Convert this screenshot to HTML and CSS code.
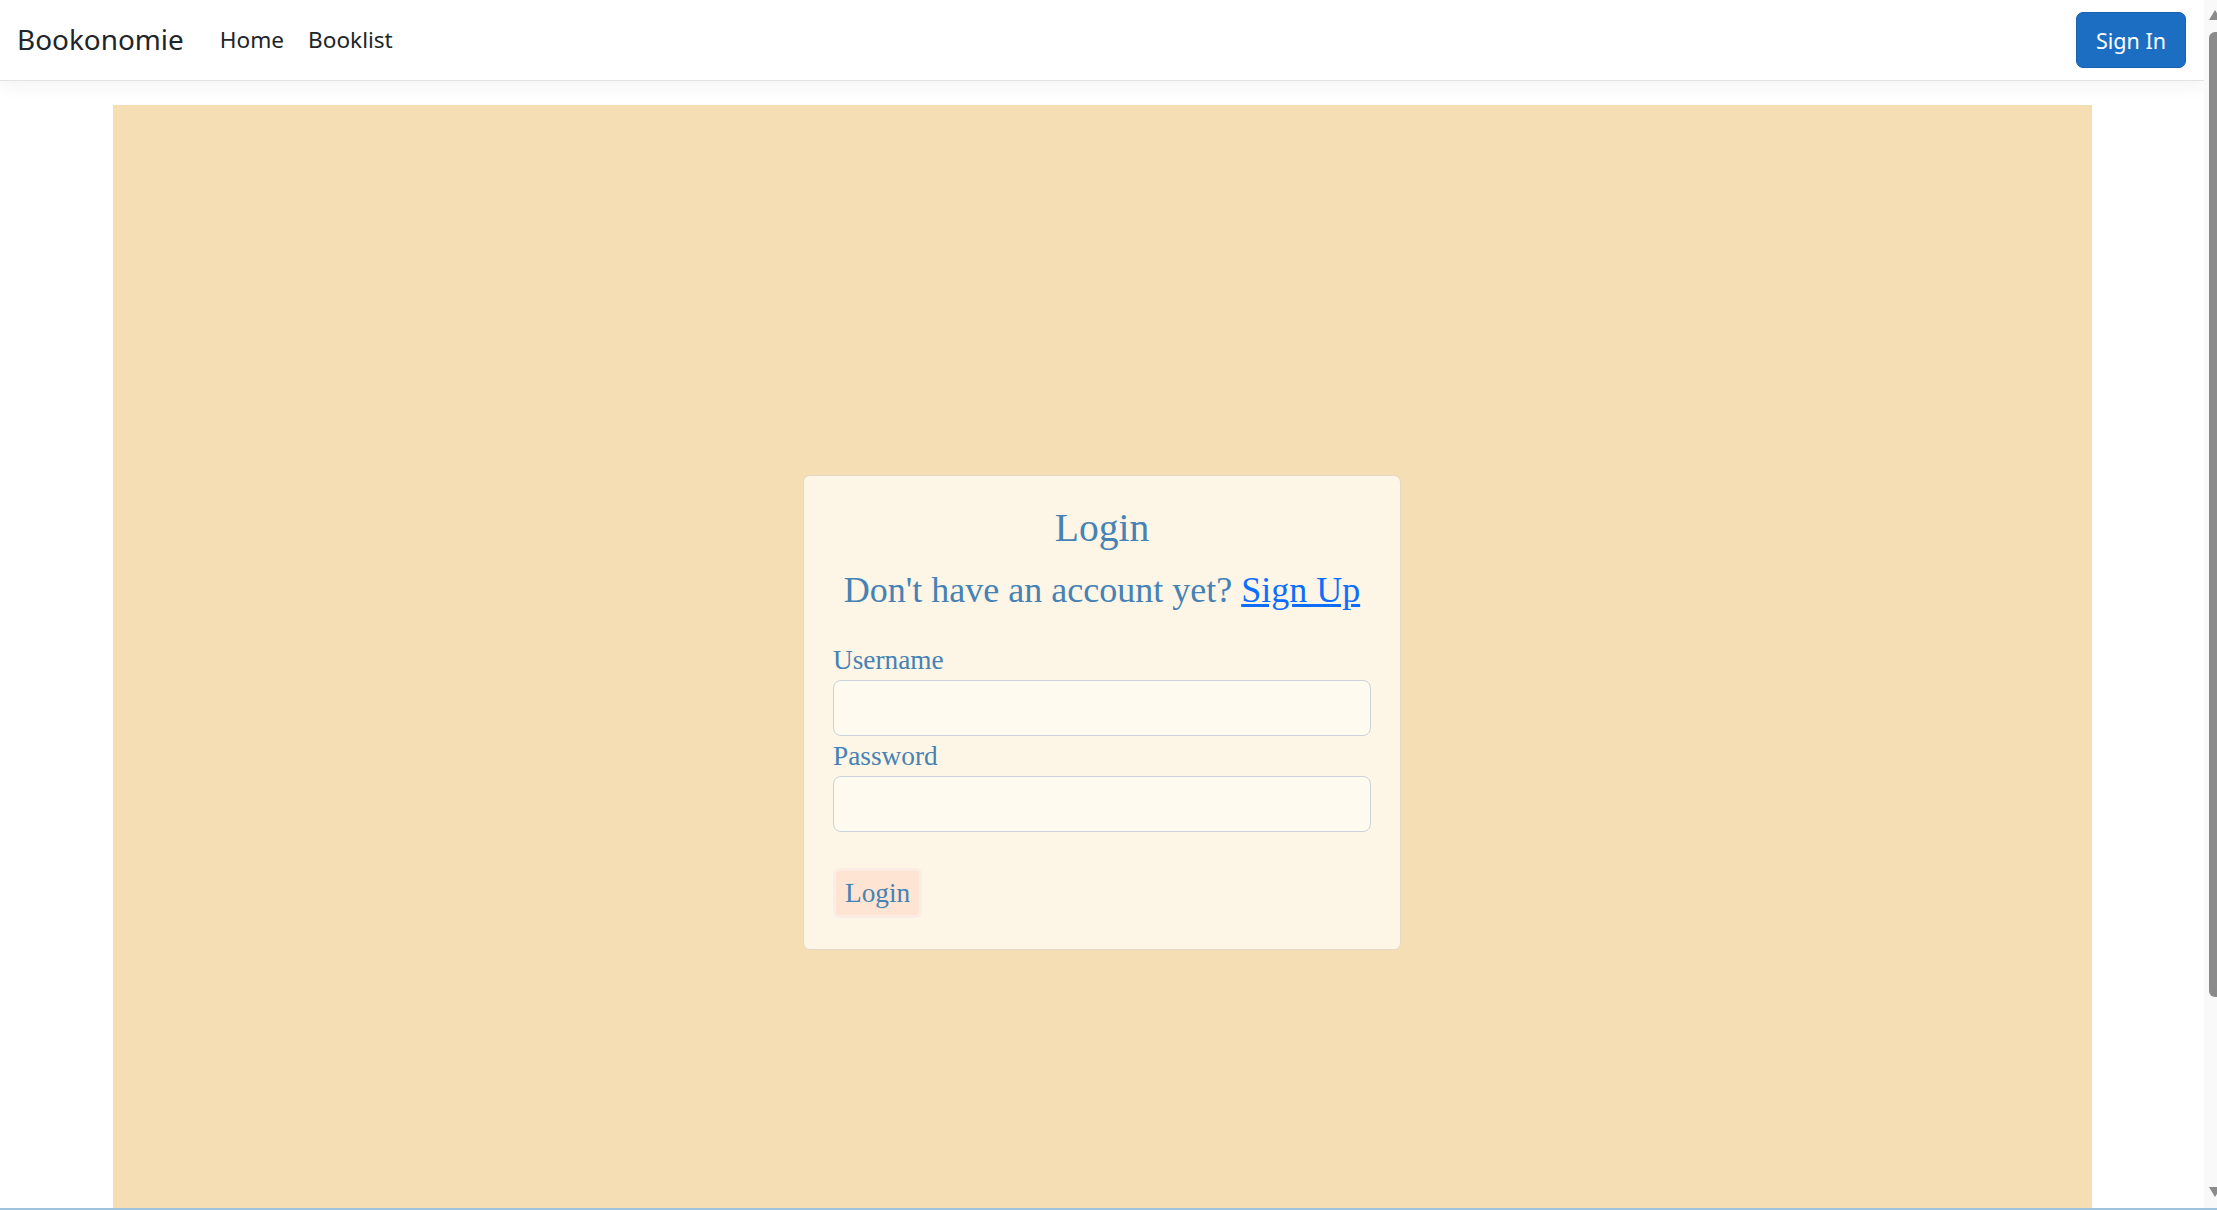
FILE: index.html
```html
<!DOCTYPE html>
<html lang="en">
<head>
<meta charset="utf-8">
<title>Login - Bookonomie</title>
<link rel="stylesheet" href="styles.css">
</head>
<body>
<div class="window">
  <div class="viewport">
    <header class="navbar">
      <div class="nav-left">
        <a class="brand" href="#">Bookonomie</a>
        <nav class="links">
          <a class="nav-link" href="#">Home</a>
          <a class="nav-link" href="#">Booklist</a>
        </nav>
      </div>
      <a class="btn-signin" href="#">Sign In</a>
    </header>
    <main class="content">
      <div class="container">
        <div class="card">
          <h3 class="title">Login</h3>
          <h4 class="subtitle">Don't have an account yet? <a class="signup" href="#">Sign Up</a></h4>
          <form class="form">
            <label class="label" for="user">Username</label>
            <input class="input" id="user" type="text">
            <label class="label" for="pass">Password</label>
            <input class="input" id="pass" type="password">
            <div class="actions"><button class="btn-login" type="button">Login</button></div>
          </form>
        </div>
      </div>
    </main>
  </div>
  <div class="scrollbar">
    <div class="arrow-up"></div>
    <div class="thumb"></div>
    <div class="arrow-down"></div>
  </div>
</div>
<div class="bottom-line"></div>
</body>
</html>
```
FILE: styles.css
```css
html, body {
  margin: 0;
  padding: 0;
  height: 100%;
  overflow: hidden;
}
body {
  display: flex;
  flex-direction: column;
  background: #ffffff;
  font-family: "Segoe UI", "Noto Sans", "Open Sans", sans-serif;
}
.window {
  flex: 1;
  display: flex;
  min-height: 0;
}
.viewport {
  flex: 1;
  min-width: 0;
  display: flex;
  flex-direction: column;
  overflow: hidden;
}
.navbar {
  position: relative;
  z-index: 2;
  height: 81px;
  flex: none;
  box-sizing: border-box;
  display: flex;
  align-items: center;
  justify-content: space-between;
  padding: 0 18px 2px 17px;
  background: #ffffff;
  border-bottom: 1px solid #e2e2e2;
  box-shadow: 0 5px 17px rgba(0, 0, 0, 0.05);
}
.nav-left {
  display: flex;
  align-items: center;
}
.brand {
  font-size: 27.9px;
  color: #212529;
  text-decoration: none;
  margin-right: 36px;
}
.links {
  display: flex;
  gap: 24px;
}
.nav-link {
  font-size: 22.6px;
  color: #212529;
  text-decoration: none;
}
.btn-signin {
  display: flex;
  align-items: center;
  justify-content: center;
  width: 110px;
  height: 56px;
  box-sizing: border-box;
  background: #1b6ec2;
  border: 1px solid #1861ac;
  border-radius: 7px;
  color: #ffffff;
  font-size: 21.5px;
  text-decoration: none;
  margin-top: 2px;
}
.content {
  flex: 1;
  padding-top: 24px;
}
.container {
  width: 1979px;
  margin: 0 auto;
  min-height: 1200px;
  background: #f5deb3;
  display: flex;
  justify-content: center;
  align-items: flex-start;
  padding-top: 370px;
  box-sizing: border-box;
}
.card {
  width: 598px;
  box-sizing: border-box;
  background: #fdf5e6;
  border: 1px solid #e3d9c9;
  border-radius: 7px;
  padding: 29px 29px 34px 29px;
  font-family: "Liberation Serif", "Times New Roman", serif;
  color: #4682b4;
}
.title {
  margin: 0 0 16px 0;
  font-size: 39.6px;
  font-weight: normal;
  line-height: 1.2;
  text-align: center;
}
.subtitle {
  margin: 0 0 28px 0;
  font-size: 36px;
  font-weight: normal;
  line-height: 1.2;
  text-align: center;
}
.signup {
  color: #0d6efd;
  text-decoration: underline;
}
.form {
  display: flex;
  flex-direction: column;
}
.label {
  font-size: 27.3px;
  line-height: 40px;
}
.input {
  height: 56px;
  box-sizing: border-box;
  background: #fffaf0;
  border: 1.5px solid #ccd2dc;
  border-radius: 8px;
  margin: 0;
  padding: 6px 16px;
  font-size: 22px;
}
.actions {
  padding-top: 39px;
  padding-left: 3px;
}
.btn-login {
  height: 44px;
  padding: 0 9px;
  margin: 0;
  border: none;
  border-radius: 3px;
  background: #fee4d3;
  box-shadow: 0 0 0 3px #fcede4;
  font-family: "Liberation Serif", "Times New Roman", serif;
  font-size: 27.3px;
  line-height: 44px;
  color: #4682b4;
}
.scrollbar {
  width: 13px;
  flex: none;
  background: #f9f9f9;
  overflow: hidden;
  display: flex;
  flex-direction: column;
  padding-left: 5px;
  box-sizing: border-box;
}
.arrow-up {
  margin-top: 10px;
  width: 0;
  height: 0;
  border-left: 6px solid transparent;
  border-right: 6px solid transparent;
  border-bottom: 10px solid #8b8b8b;
}
.thumb {
  margin-top: 12px;
  width: 14px;
  height: 965px;
  background: #8b8b8b;
  border-radius: 6px;
}
.arrow-down {
  margin-top: auto;
  margin-bottom: 11px;
  width: 0;
  height: 0;
  border-left: 6px solid transparent;
  border-right: 6px solid transparent;
  border-top: 10px solid #8b8b8b;
}
.bottom-line {
  height: 2px;
  flex: none;
  background: #9fc3dd;
}
```
